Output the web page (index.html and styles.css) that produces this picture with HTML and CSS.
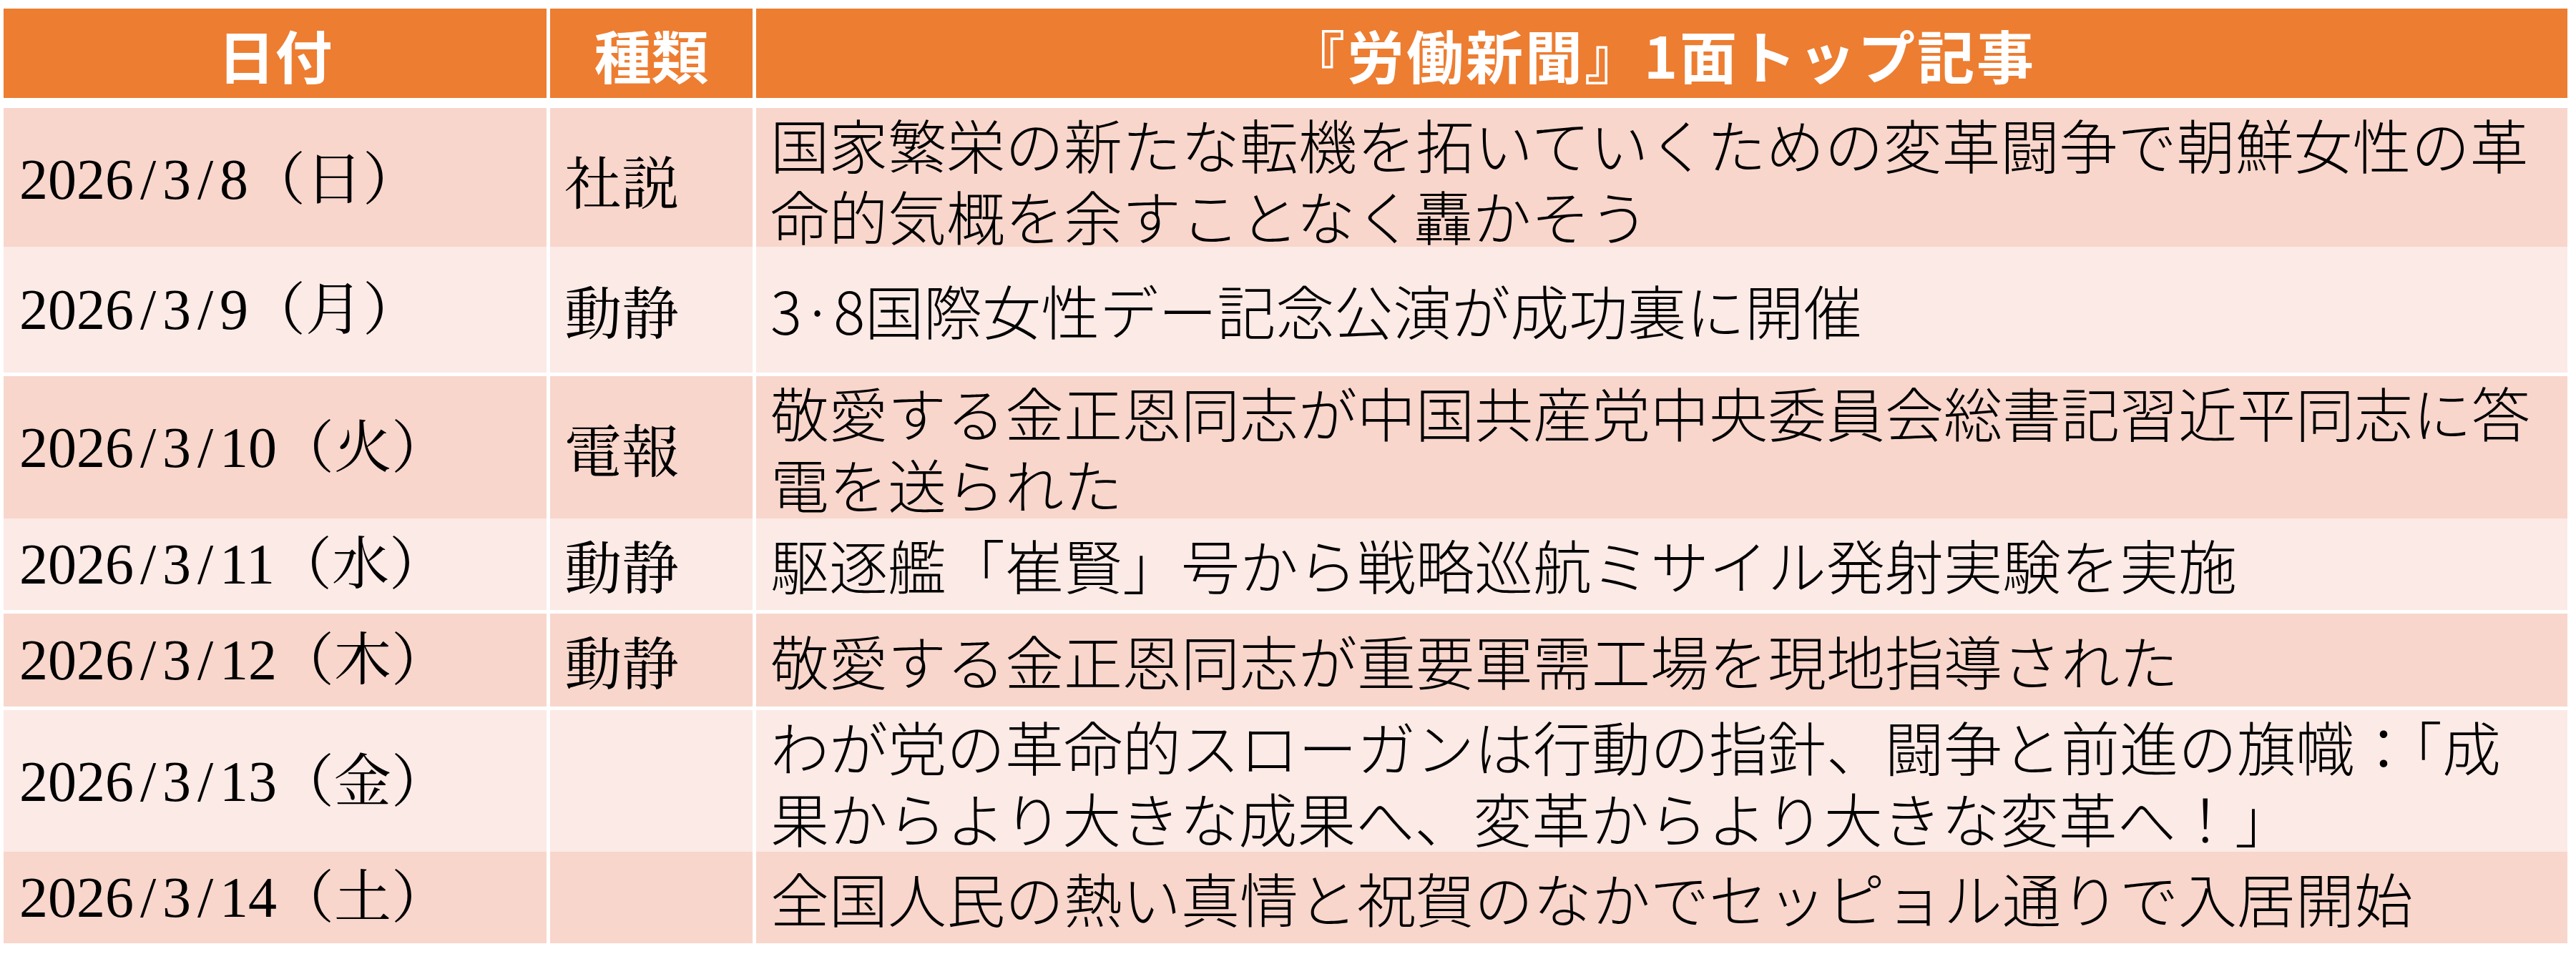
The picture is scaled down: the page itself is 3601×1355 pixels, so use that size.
FILE: index.html
```html
<!DOCTYPE html>
<html lang="ja">
<head>
<meta charset="utf-8">
<title>『労働新聞』1面トップ記事</title>
<link rel="stylesheet" href="styles.css">
</head>
<body>
<div class="table">
  <div class="row head">
    <div class="cell">日付</div>
    <div class="cell">種類</div>
    <div class="cell wide">『労働新聞』1面トップ記事</div>
  </div>
  <div class="row odd r1">
    <div class="cell date">2026<span class="sl">/</span>3<span class="sl">/</span>8（日）</div>
    <div class="cell kind">社説</div>
    <div class="cell title">国家繁栄の新たな転機を拓いていくための変革闘争で朝鮮女性の革命的気概を余すことなく轟かそう</div>
  </div>
  <div class="row even r2">
    <div class="cell date">2026<span class="sl">/</span>3<span class="sl">/</span>9（月）</div>
    <div class="cell kind">動静</div>
    <div class="cell title">3·8国際女性デー記念公演が成功裏に開催</div>
  </div>
  <div class="row odd r3">
    <div class="cell date">2026<span class="sl">/</span>3<span class="sl">/</span>10（火）</div>
    <div class="cell kind">電報</div>
    <div class="cell title">敬愛する金正恩同志が中国共産党中央委員会総書記習近平同志に答電を送られた</div>
  </div>
  <div class="row even r4">
    <div class="cell date">2026<span class="sl">/</span>3<span class="sl">/</span>11（水）</div>
    <div class="cell kind">動静</div>
    <div class="cell title">駆逐艦「崔賢」号から戦略巡航ミサイル発射実験を実施</div>
  </div>
  <div class="row odd r5">
    <div class="cell date">2026<span class="sl">/</span>3<span class="sl">/</span>12（木）</div>
    <div class="cell kind">動静</div>
    <div class="cell title">敬愛する金正恩同志が重要軍需工場を現地指導された</div>
  </div>
  <div class="row even r6">
    <div class="cell date">2026<span class="sl">/</span>3<span class="sl">/</span>13（金）</div>
    <div class="cell kind"></div>
    <div class="cell title">わが党の革命的スローガンは行動の指針、闘争と前進の旗幟：「成果からより大きな成果へ、変革からより大きな変革へ！」</div>
  </div>
  <div class="row odd r7">
    <div class="cell date">2026<span class="sl">/</span>3<span class="sl">/</span>14（土）</div>
    <div class="cell kind"></div>
    <div class="cell title">全国人民の熱い真情と祝賀のなかでセッピョル通りで入居開始</div>
  </div>
</div>
</body>
</html>
```

FILE: styles.css
```css
html, body {
  margin: 0;
  padding: 0;
  background: #ffffff;
}

body {
  padding: 12px 0 0 5px;
  font-family: "Noto Sans CJK JP", sans-serif;
  color: #000000;
}

.table {
  display: flex;
  flex-direction: column;
  gap: 5px;
  width: 3584px;
}

.row {
  display: grid;
  grid-template-columns: 759px 283px 2532px;
  column-gap: 5px;
}

.cell {
  display: flex;
  align-items: center;
  overflow: visible;
}

.head {
  height: 125px;
  margin-bottom: 9px;
}

.head .cell {
  background: #ed7d31;
  color: #ffffff;
  font-family: "Noto Sans CJK JP", sans-serif;
  font-weight: 700;
  font-size: 80px;
  line-height: 100px;
  justify-content: center;
}

.head .wide {
  letter-spacing: 3px;
}

.odd .cell { background: #f8d6cc; }
.even .cell { background: #fbeae6; }

.r1 { height: 189px; }
.r2 { height: 176px; }
.r3 { height: 194px; }
.r4 { height: 128px; }
.r5 { height: 130px; }
.r6 { height: 193px; }
.r7 { height: 128px; }

.date {
  font-family: "Liberation Serif", "Noto Serif CJK JP", "Noto Sans CJK JP", serif;
  font-size: 80px;
  line-height: 100px;
  padding-left: 22px;
  white-space: nowrap;
}

.sl {
  display: inline-block;
  width: 0.5em;
  text-align: center;
}

.kind {
  font-family: "Noto Serif CJK JP", "Noto Sans CJK JP", serif;
  font-size: 80px;
  line-height: 100px;
  padding-left: 20px;
}

.title {
  font-family: "Noto Sans CJK JP", sans-serif;
  font-weight: 300;
  font-size: 82px;
  line-height: 100px;
  padding: 0 20px;
}
```
